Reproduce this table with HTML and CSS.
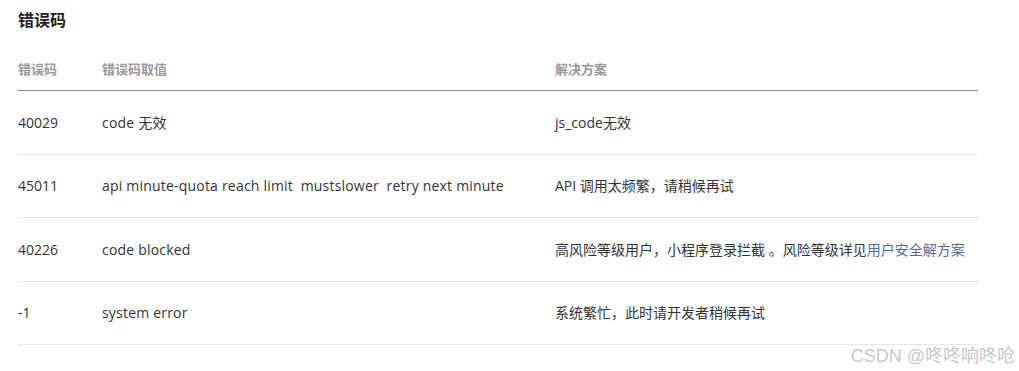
FILE: index.html
```html
<!DOCTYPE html>
<html lang="zh-CN">
<head>
<meta charset="utf-8">
<title>错误码</title>
<link rel="stylesheet" href="styles.css">
</head>
<body>
<div class="page">
  <h3 class="title">错误码</h3>
  <table class="codes">
    <colgroup>
      <col class="c1"><col class="c2"><col class="c3">
    </colgroup>
    <thead>
      <tr><th>错误码</th><th>错误码取值</th><th>解决方案</th></tr>
    </thead>
    <tbody>
      <tr><td>40029</td><td class="latin">code 无效</td><td>js_code无效</td></tr>
      <tr><td>45011</td><td class="latin pre">api minute-quota reach limit  mustslower  retry next minute</td><td>API 调用太频繁，请稍候再试</td></tr>
      <tr><td>40226</td><td class="latin">code blocked</td><td>高风险等级用户，小程序登录拦截 。风险等级详见<a class="link" href="#">用户安全解方案</a></td></tr>
      <tr><td>-1</td><td class="latin">system error</td><td>系统繁忙，此时请开发者稍候再试</td></tr>
    </tbody>
  </table>
  <div class="watermark">CSDN @咚咚响咚呛</div>
</div>
</body>
</html>
```
FILE: styles.css
```css
html, body {
  margin: 0;
  padding: 0;
  background: #ffffff;
}
body {
  font-family: "Open Sans", "Noto Sans CJK SC", sans-serif;
  color: #333333;
  width: 1019px;
  height: 371px;
  overflow: hidden;
}
.page {
  position: relative;
  height: 371px;
  padding: 8px 0 0 18px;
  box-sizing: border-box;
}
.title {
  margin: 0;
  font-size: 16px;
  line-height: 24px;
  font-weight: 700;
  color: #222222;
}
.codes {
  width: 960px;
  border-collapse: collapse;
  table-layout: fixed;
}
.c1 { width: 84px; }
.c2 { width: 453px; }
.c3 { width: 423px; }
.codes th {
  text-align: left;
  font-size: 13px;
  font-weight: 700;
  color: #999999;
  line-height: 20px;
  padding: 27px 0 11px 0;
  border-bottom: 1px solid #8c8c8c;
}
.codes td {
  font-size: 14px;
  line-height: 20px;
  padding: 21.5px 0 21px 0;
  border-bottom: 1px solid #e6e6e6;
  vertical-align: middle;
  white-space: nowrap;
}
.codes td.latin {
  letter-spacing: 0.2px;
}
.codes td.pre {
  white-space: pre;
}
.link {
  color: #576b95;
  text-decoration: none;
}
.watermark {
  position: absolute;
  right: 4px;
  bottom: 5px;
  font-family: "Liberation Sans", "Noto Sans CJK SC", sans-serif;
  font-size: 18px;
  line-height: 20px;
  color: #c8c8c8;
  text-shadow: 0 0 1px #ffffff;
}
```
